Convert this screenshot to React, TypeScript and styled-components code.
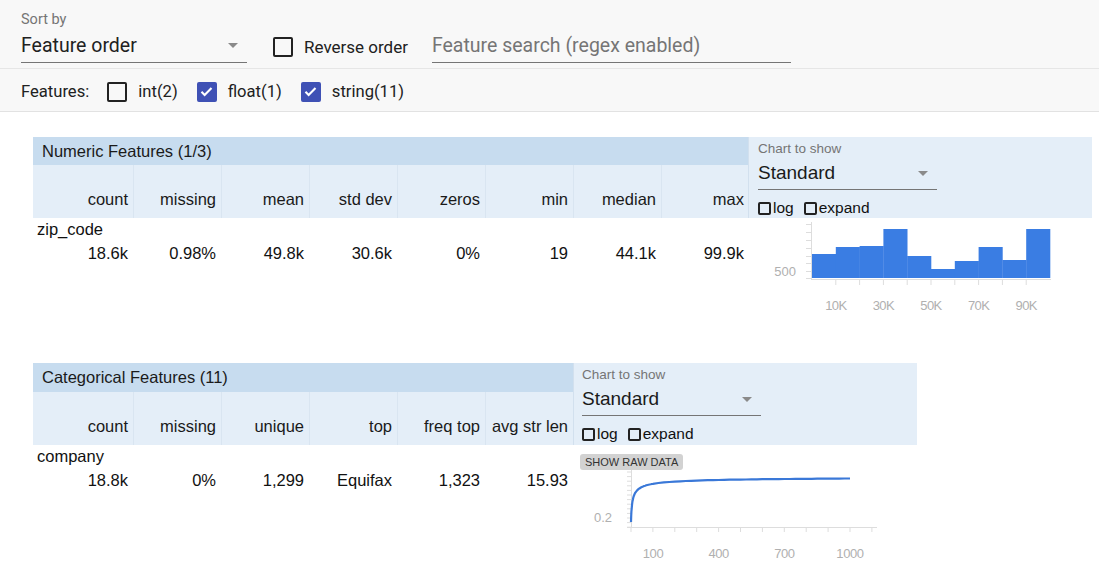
import React from "react";
import styled, { createGlobalStyle } from "styled-components";

const Global = createGlobalStyle`
  html, body { margin: 0; padding: 0; background: #fff; }
  body { font-family: "Liberation Sans", Arial, sans-serif; color: #111; }
  * { box-sizing: border-box; }
`;

const Page = styled.div`
  width: 1099px;
  height: 568px;
  overflow: hidden;
  background: #fff;
`;

const Toolbar = styled.div`
  background: #f8f8f8;
  font-family: Roboto, "Liberation Sans", sans-serif;
  border-bottom: 1px solid #e2e2e2;
`;

const ToolRow = styled.div<{ $h: number; $top?: boolean }>`
  display: flex;
  align-items: ${(p) => (p.$top ? "center" : "flex-end")};
  height: ${(p) => p.$h}px;
  padding: ${(p) => (p.$top ? 3 : 0)}px 0 ${(p) => (p.$top ? 0 : 5)}px 21px;
  ${(p) => (p.$top ? "border-top: 1px solid #e6e6e6;" : "")}
`;

const Dropdown = styled.div<{ $w: number }>`
  width: ${(p) => p.$w}px;
  display: flex;
  flex-direction: column;
`;

const FieldLabel = styled.div<{ $size: number }>`
  font-size: ${(p) => p.$size}px;
  color: #757575;
  line-height: 1.15;
`;

const FieldValue = styled.div<{ $size: number; $color?: string; $pt: number; $pb: number }>`
  position: relative;
  font-size: ${(p) => p.$size}px;
  color: ${(p) => p.$color || "#212121"};
  line-height: 1.2;
  padding: ${(p) => p.$pt}px 0 ${(p) => p.$pb}px;
  border-bottom: 1px solid #757575;
`;

const Caret = styled.span`
  position: absolute;
  right: 9px;
  top: 50%;
  margin-top: -2px;
  width: 0;
  height: 0;
  border-left: 5px solid transparent;
  border-right: 5px solid transparent;
  border-top: 5px solid #8a8a8a;
`;

const CheckLabel = styled.label<{ $ml: number; $size: number; $mb?: number }>`
  display: flex;
  align-items: center;
  margin-left: ${(p) => p.$ml}px;
  margin-bottom: ${(p) => p.$mb || 0}px;
  font-size: ${(p) => p.$size}px;
  line-height: 1.2;
  color: #212121;
`;

const Box = styled.span<{ $checked?: boolean; $gap: number }>`
  width: 20px;
  height: 20px;
  border-radius: 2px;
  border: 2px solid ${(p) => (p.$checked ? "#3f51b5" : "#222")};
  background: ${(p) => (p.$checked ? "#3f51b5" : "transparent")};
  margin-right: ${(p) => p.$gap}px;
  display: inline-flex;
  align-items: center;
  justify-content: center;
`;

const MiniBox = styled.span`
  width: 13px;
  height: 13px;
  border: 2px solid #222;
  border-radius: 2px;
  margin-right: 2px;
  display: inline-block;
`;

const Check = () => (
  <svg width="15" height="15" viewBox="0 0 24 24">
    <path d="M4 12.5l5 5L20 6.5" fill="none" stroke="#fff" strokeWidth="3.4" />
  </svg>
);

const Search = styled.div`
  margin-left: 24px;
  width: 359px;
  font-size: 19.5px;
  line-height: 1.2;
  color: #757575;
  padding: 0 0 5px;
  border-bottom: 1px solid #757575;
`;

const Section = styled.div<{ $mt: number }>`
  display: flex;
  margin-left: 33px;
  margin-top: ${(p) => p.$mt}px;
`;

const LeftCol = styled.div<{ $w: number }>`
  width: ${(p) => p.$w}px;
  display: flex;
  flex-direction: column;
`;

const RightCol = styled.div<{ $w: number }>`
  width: ${(p) => p.$w}px;
  display: flex;
  flex-direction: column;
`;

const Band = styled.div<{ $h: number }>`
  height: ${(p) => p.$h}px;
  background: #c7dcef;
  font-size: 16.5px;
  color: #1a1a1a;
  display: flex;
  align-items: center;
  padding-left: 9px;
`;

const HeadRow = styled.div<{ $cols: number }>`
  display: grid;
  grid-template-columns: 100px repeat(${(p) => p.$cols}, 88px);
  height: 53px;
  background: #e4eef8;
`;

const HeadCell = styled.div`
  font-size: 16.5px;
  color: #1a1a1a;
  text-align: right;
  padding: 0 5px 9px 0;
  display: flex;
  align-items: flex-end;
  justify-content: flex-end;
  white-space: nowrap;
  border-left: 1px solid #d9e5f1;
  &:first-child { border-left: none; }
`;

const NameRow = styled.div`
  font-size: 16.5px;
  height: 22px;
  line-height: 22px;
  padding-left: 4px;
  color: #111;
`;

const ValueRow = styled.div<{ $cols: number }>`
  display: grid;
  grid-template-columns: 100px repeat(${(p) => p.$cols}, 88px);
  height: 26px;
  align-items: center;
`;

const ValueCell = styled.div`
  font-size: 16.5px;
  text-align: right;
  padding-right: 5px;
  color: #111;
`;

const ChartPanel = styled.div<{ $h: number; $pl: number }>`
  height: ${(p) => p.$h}px;
  background: #e4eef8;
  padding: 4px 0 0 ${(p) => p.$pl}px;
  display: flex;
  flex-direction: column;
  border-left: 1px solid #d2e0ee;
`;

const PanelDrop = styled.div`
  width: 179px;
  font-family: "Liberation Sans", Arial, sans-serif;
`;

const ToggleRow = styled.div`
  display: flex;
  align-items: center;
  font-size: 15.5px;
  line-height: 16px;
  margin-top: 10px;
  color: #111;
`;

const Toggle = styled.span<{ $ml?: number }>`
  display: inline-flex;
  align-items: center;
  margin-left: ${(p) => p.$ml || 0}px;
`;

const RawButton = styled.div`
  align-self: flex-start;
  margin: 9px 0 0 7px;
  height: 16px;
  padding: 0 5px;
  font-size: 11px;
  line-height: 16px;
  color: #333;
  background: #d2d2d2;
  border-radius: 3px;
`;

const ChartSvg = styled.svg`
  display: block;
  overflow: visible;
`;

const axisText = {
  fill: "#b0b0b0",
  fontSize: 13,
  fontFamily: "'Liberation Sans', Arial, sans-serif",
} as const;

const numericCols = ["count", "missing", "mean", "std dev", "zeros", "min", "median", "max"];
const numericVals = ["18.6k", "0.98%", "49.8k", "30.6k", "0%", "19", "44.1k", "99.9k"];
const catCols = ["count", "missing", "unique", "top", "freq top", "avg str len"];
const catVals = ["18.8k", "0%", "1,299", "Equifax", "1,323", "15.93"];

const barTops = [36, 29, 28, 11, 38, 51, 43, 29, 42, 11];

function Histogram() {
  const x0 = 64;
  const w = 23.8;
  const yTicks = [6, 14, 22, 30, 38, 45, 53, 60];
  return (
    <ChartSvg width={344} height={100}>
      {barTops.map((t, i) => (
        <rect key={i} x={x0 + i * w} y={t} width={w + 0.3} height={60 - t} fill="#3a7de3" />
      ))}
      <line x1={63.5} y1={4} x2={63.5} y2={61} stroke="#ddd" />
      {yTicks.map((y) => (
        <line key={y} x1={58} y1={y + 0.5} x2={63} y2={y + 0.5} stroke="#ddd" />
      ))}
      <line x1={63} y1={61.5} x2={303} y2={61.5} stroke="#ddd" />
      {Array.from({ length: 9 }).map((_, i) => (
        <line key={i} x1={x0 + (i + 1) * w} y1={62} x2={x0 + (i + 1) * w} y2={67} stroke="#ddd" />
      ))}
      <text x={48} y={58} textAnchor="end" {...axisText}>500</text>
      {["10K", "30K", "50K", "70K", "90K"].map((l, i) => (
        <text key={l} x={x0 + (2 * i + 1) * w} y={92} textAnchor="middle" {...axisText} letterSpacing={-0.6}>
          {l}
        </text>
      ))}
    </ChartSvg>
  );
}

function LineChart() {
  const pts: string[] = [];
  for (let t = 0; t <= 1000; t += t < 20 ? 1 : t < 100 ? 5 : 25) {
    const x = 58 + t * 0.219;
    const y = 6 + 46 / Math.sqrt(1 + t / 3);
    pts.push(`${x.toFixed(1)},${y.toFixed(1)}`);
  }
  const yTicks = Array.from({ length: 13 }).map((_, i) => 2 + i * 4.6);
  return (
    <ChartSvg width={320} height={95}>
      <line x1={58.5} y1={0} x2={58.5} y2={57} stroke="#ddd" />
      {yTicks.map((y, i) => (
        <line key={i} x1={54} y1={y} x2={58} y2={y} stroke="#ddd" />
      ))}
      <line x1={54} y1={57.5} x2={304} y2={57.5} stroke="#ddd" />
      {Array.from({ length: 12 }).map((_, i) => (
        <line key={i} x1={58 + i * 21.9} y1={58} x2={58 + i * 21.9} y2={62} stroke="#ddd" />
      ))}
      <polyline points={pts.join(" ")} fill="none" stroke="#3a78d8" strokeWidth={2.2} />
      <text x={39} y={52} textAnchor="end" {...axisText}>0.2</text>
      {[["100", 80], ["400", 145.7], ["700", 211.4], ["1000", 277]].map(([l, x]) => (
        <text key={l as string} x={x as number} y={88} textAnchor="middle" {...axisText} letterSpacing={-0.4}>
          {l}
        </text>
      ))}
    </ChartSvg>
  );
}

function ChartControls({ h, pl }: { h: number; pl: number }) {
  return (
    <ChartPanel $h={h} $pl={pl}>
      <PanelDrop>
        <FieldLabel $size={13.5}>Chart to show</FieldLabel>
        <FieldValue $size={19} $color="#1a1a1a" $pt={5} $pb={5}>
          Standard
          <Caret />
        </FieldValue>
      </PanelDrop>
      <ToggleRow>
        <Toggle>
          <MiniBox />log
        </Toggle>
        <Toggle $ml={10}>
          <MiniBox />expand
        </Toggle>
      </ToggleRow>
    </ChartPanel>
  );
}

export default function App() {
  return (
    <Page>
      <Global />
      <Toolbar>
        <ToolRow $h={68}>
          <Dropdown $w={226}>
            <FieldLabel $size={14.5}>Sort by</FieldLabel>
            <FieldValue $size={19.5} $pt={5} $pb={5}>
              Feature order
              <Caret />
            </FieldValue>
          </Dropdown>
          <CheckLabel $ml={26} $size={17} $mb={6}>
            <Box $gap={11} />
            Reverse order
          </CheckLabel>
          <Search>Feature search (regex enabled)</Search>
        </ToolRow>
        <ToolRow $h={43} $top>
          <CheckLabel $ml={0} $size={16.6}>Features:</CheckLabel>
          <CheckLabel $ml={18} $size={16.6}>
            <Box $gap={11} />
            int(2)
          </CheckLabel>
          <CheckLabel $ml={19} $size={16.6}>
            <Box $gap={11} $checked>
              <Check />
            </Box>
            float(1)
          </CheckLabel>
          <CheckLabel $ml={19} $size={16.6}>
            <Box $gap={11} $checked>
              <Check />
            </Box>
            string(11)
          </CheckLabel>
        </ToolRow>
      </Toolbar>

      <Section $mt={25}>
        <LeftCol $w={715}>
          <Band $h={28}>Numeric Features (1/3)</Band>
          <HeadRow $cols={7}>
            {numericCols.map((c) => (
              <HeadCell key={c}>{c}</HeadCell>
            ))}
          </HeadRow>
          <NameRow>zip_code</NameRow>
          <ValueRow $cols={7}>
            {numericVals.map((v, i) => (
              <ValueCell key={i}>{v}</ValueCell>
            ))}
          </ValueRow>
        </LeftCol>
        <RightCol $w={344}>
          <ChartControls h={81} pl={9} />
          <Histogram />
        </RightCol>
      </Section>

      <Section $mt={45}>
        <LeftCol $w={540}>
          <Band $h={29}>Categorical Features (11)</Band>
          <HeadRow $cols={5}>
            {catCols.map((c) => (
              <HeadCell key={c}>{c}</HeadCell>
            ))}
          </HeadRow>
          <NameRow>company</NameRow>
          <ValueRow $cols={5}>
            {catVals.map((v, i) => (
              <ValueCell key={i}>{v}</ValueCell>
            ))}
          </ValueRow>
        </LeftCol>
        <RightCol $w={344}>
          <ChartControls h={82} pl={8} />
          <RawButton>SHOW RAW DATA</RawButton>
          <LineChart />
        </RightCol>
      </Section>
    </Page>
  );
}
